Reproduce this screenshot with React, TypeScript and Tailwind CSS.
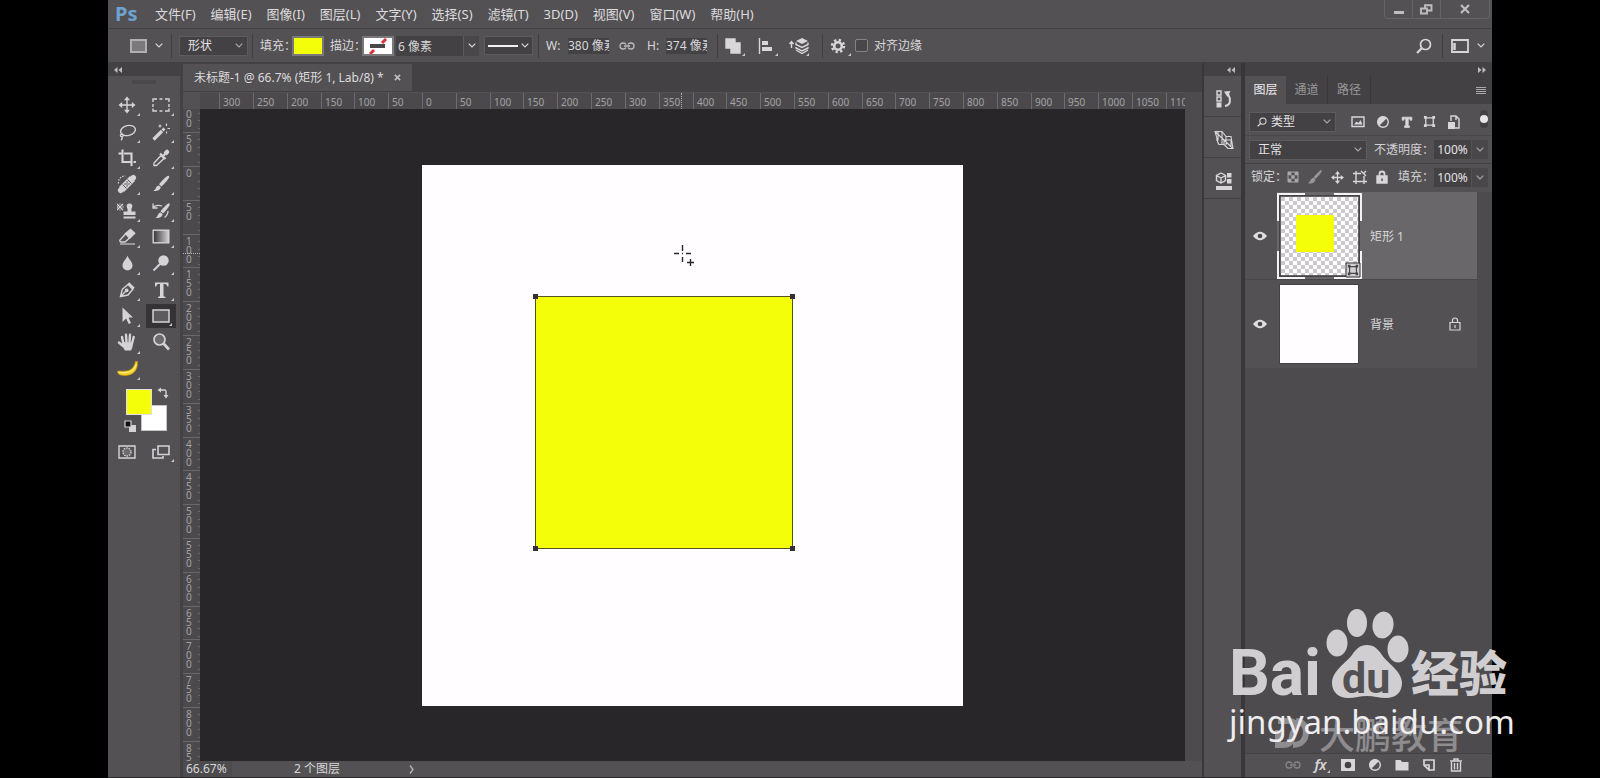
import React from "react";
import type { ReactNode } from "react";

const SCALE = 0.6763;
const ORIGIN_X = 222;
const ORIGIN_Y = 57;

const menus = ["文件(F)", "编辑(E)", "图像(I)", "图层(L)", "文字(Y)", "选择(S)", "滤镜(T)", "3D(D)", "视图(V)", "窗口(W)", "帮助(H)"];

type SvgProps = { children: ReactNode; box?: string; className?: string };

function Svg({ children, box = "0 0 20 20", className = "size-5" }: SvgProps) {
  return (
    <svg viewBox={box} className={`shrink-0 ${className}`} fill="none" stroke="currentColor" strokeWidth="1.4" aria-hidden="true">
      {children}
    </svg>
  );
}

function Chevron({ className = "w-2 h-[5px]" }: { className?: string }) {
  return (
    <Svg box="0 0 8 5" className={className}>
      <path d="M.7.7 4 4 7.300 .7" strokeWidth="1.2" />
    </Svg>
  );
}

function Separator() {
  return <span className="h-6 w-px shrink-0 bg-[#403e41]" />;
}

function Corner() {
  return (
    <svg viewBox="0 0 4 4" className="absolute right-1 bottom-0.5 size-[3px]" aria-hidden="true">
      <path d="M4 0v4H0z" fill="#c9c7ca" />
    </svg>
  );
}

function Drop({ label, value, className, lead }: { label: string; value: string; className: string; lead?: ReactNode }) {
  return (
    <label className={`relative flex h-5 shrink-0 items-center border border-[#5d5b5e] bg-[#434144] ${className}`}>
      {lead}
      <select
        aria-label={label}
        className={`h-full w-full appearance-none bg-transparent text-xs leading-4 text-[#e4e2e5] outline-none ${lead ? "pl-1" : "pl-2"}`}
      >
        <option>{value}</option>
      </select>
      <span className="pointer-events-none absolute right-1 text-[#aaa8ab]">
        <Chevron />
      </span>
    </label>
  );
}

function Percent({ id, label }: { id: string; label: string }) {
  return (
    <div className="flex items-center text-xs">
      <label htmlFor={id} className="whitespace-nowrap text-[#d2d0d3]">{label}</label>
      <input id={id} defaultValue="100%" className="h-[19px] w-[37px] bg-[#434144] text-center text-xs text-[#e4e2e5] outline-none" />
      <button aria-label={`${label}滑块`} className="ml-px flex h-[19px] w-4 items-center justify-center bg-[#49474a] text-[#aaa8ab]">
        <Chevron />
      </button>
    </div>
  );
}

const icons = {
  move: (
    <Svg>
      <path d="M10 3v14M3 10h14" />
      <path d="M10 1.500 7 5.200h6zM10 18.500 7 14.800h6zM1.500 10 5.200 7v6zM18.500 10 14.800 7v6z" fill="currentColor" stroke="none" />
    </Svg>
  ),
  marquee: (
    <Svg>
      <path d="M2 7V4h4M8.500 4h3M14 4h4v3M18 9v3M18 13.500V16h-4M11.500 16h-3M6 16H2v-2.500M2 12V9" />
    </Svg>
  ),
  lasso: (
    <Svg>
      <ellipse cx="11" cy="8.500" rx="7.500" ry="5" transform="rotate(-12 11 8.500)" />
      <path d="M5.500 11.500c-2 .5-2.800 2.300-1.300 3 1.400.5 2.500-.6 1.800-2M5 14.500c.5 1.500.2 2.800-1 3.800" />
    </Svg>
  ),
  wand: (
    <Svg>
      <path d="m2.500 17.500 8.500-8.500" strokeWidth="3.200" />
      <path d="m11.500 8.500 2-2" strokeWidth="2.600" />
      <path d="M9 2.500v3M7.500 4h3M15.500 1.500v2.500M16.500 6.500h2.500M15.500 9.500v2" strokeWidth="1.200" />
    </Svg>
  ),
  crop: (
    <Svg>
      <path d="M5.500 1.500v12.500H15M1.500 5.500h3M7 5.500h7.500V18M16.500 14h2.500" strokeWidth="2.100" />
    </Svg>
  ),
  dropper: (
    <Svg>
      <path d="m10 7.500 3 3-7.500 7H3v-2.500z" />
      <path d="m9 5.500 5.500 5.500M12 8l3.500-3.500" strokeWidth="2.200" />
      <path d="M15.200 4.800 16 4" strokeWidth="4.500" strokeLinecap="round" />
    </Svg>
  ),
  heal: (
    <Svg>
      <path d="M4.500 15.500 15.500 4.500" strokeWidth="7" />
      <path d="M3.700 16.300 4 16M16 4l.3-.3" strokeWidth="5.500" strokeLinecap="round" />
      <path d="m5.500 10.500 4 4M10.500 5.500l4 4" stroke="#535154" strokeWidth="1" />
      <path d="M8 10h.1M10 12h.1M10 8h.1M12 10h.1M10 10h.1" stroke="#535154" strokeWidth="1.400" strokeLinecap="round" />
      <path d="M1.500 9.500C1 5 4 2 8.500 2" strokeDasharray="1.500 1.300" strokeWidth="1.200" />
    </Svg>
  ),
  brush: (
    <Svg>
      <path d="M17.500 2.500c.8.700-4.300 6.700-7 9L9 10.200c2.300-2.700 7.700-8.300 8.500-7.700z" fill="currentColor" />
      <path d="M8 11.500 9.700 13c0 3-3.700 4.500-7.700 4 2-1.200 2.500-2 3-3.300.5-1.200 1.500-2.200 3-2.200z" fill="currentColor" stroke="none" />
    </Svg>
  ),
  stamp: (
    <Svg>
      <path d="M12.500 2.500c2.500 0 3.300 2 2.700 3.500-.8 1.500-.9 3-.7 4.500h4V14H6.500v-3.500h4c.2-1.500.1-3-.7-4.500-.6-1.500.2-3.500 2.700-3.500zM6.500 15.500h12v2h-12z" fill="currentColor" stroke="none" />
      <path d="m0 3 6 6M6 3 0 9M0 3v0M3 2.500v1M3 8.500v1M0 6h1M5.500 6h1" strokeWidth="1.300" />
    </Svg>
  ),
  history: (
    <Svg>
      <path d="M18 3c.8.700-3.800 6.700-6 8.500l-1.500-1.300C12.500 7.500 17.200 2.500 18 3z" fill="currentColor" />
      <path d="m9.700 11.500 1.800 1.600c0 2.900-3.500 4.400-7 3.900 2.500-1 2.300-5.500 5.200-5.500z" fill="currentColor" stroke="none" />
      <path d="M2 6.500c2.500-2.500 5.500-2.500 9-1.500M2 2.500v4.500h4.500M17 10c0 3-1.500 5-3.500 6.500" strokeWidth="1.300" />
    </Svg>
  ),
  eraser: (
    <Svg>
      <path d="m8.500 6.500 5-4 4.200 3.800-5 5z" fill="currentColor" />
      <path d="m8.500 7-5.500 6c-.5.500 0 2 1 2h4l4.500-4" />
      <path d="M3 17h15" strokeWidth="1.100" />
    </Svg>
  ),
  gradient: (
    <Svg>
      <defs>
        <linearGradient id="toolGradient">
          <stop offset="0" stopColor="#353336" />
          <stop offset="1" stopColor="#d5d3d6" />
        </linearGradient>
      </defs>
      <rect x="2.200" y="3.200" width="15.600" height="12.600" fill="url(#toolGradient)" />
    </Svg>
  ),
  blur: (
    <Svg>
      <path d="M10.500 2.500c.8 3.500 5 6 5 10a5 5 0 0 1-10 0c0-4 4.200-6.500 5-10z" fill="currentColor" stroke="none" />
    </Svg>
  ),
  dodge: (
    <Svg>
      <circle cx="12.500" cy="7.500" r="5.200" fill="currentColor" stroke="none" />
      <path d="m9 11-6.500 6.500" strokeWidth="2" />
    </Svg>
  ),
  pen: (
    <Svg>
      <path d="m3.500 16.500 1.800-7.200L11 4.500l4.800 4.800L11 15zM3.500 16.500 9 11" />
      <circle cx="9.700" cy="10.300" r="1.200" fill="currentColor" />
      <path d="m11.500 3 5.500 5.500" strokeWidth="2.200" />
    </Svg>
  ),
  type: (
    <Svg>
      <path d="M4 2.500h13.500v4h-1.300c-.3-1.900-.9-2.500-3.700-2.500v11.500c0 1 .6 1.300 2 1.300V18H7v-1.200c1.400 0 2-.3 2-1.300V4c-2.800 0-3.400.6-3.700 2.500H4z" fill="currentColor" stroke="none" />
    </Svg>
  ),
  arrow: (
    <Svg>
      <path d="M5.500 1.500v14.500l3.600-3.500L11.700 18l2.300-1-2.500-5.500h4.500z" fill="currentColor" stroke="none" />
    </Svg>
  ),
  rect: (
    <Svg>
      <rect x="2" y="4" width="16" height="12" fill="#5d5b5e" strokeWidth="1.500" />
    </Svg>
  ),
  hand: (
    <Svg>
      <path d="M6.500 12 5 5M9.500 10 9 2.800M12.500 10l.5-7.200M15 11.500l1.700-6.500M6 14l-4-3.500" strokeWidth="2.400" strokeLinecap="round" />
      <path d="m5 10 11 .5c0 3-.5 5-2 8H8c-1.500-2-3-4.500-3-8.500z" fill="currentColor" stroke="none" />
    </Svg>
  ),
  zoom: (
    <Svg>
      <circle cx="8.500" cy="7.500" r="5.500" fill="#6d6b6e" strokeWidth="1.700" />
      <path d="m12.500 11.500 5.500 6" strokeWidth="2.600" />
    </Svg>
  ),
  banana: (
    <Svg box="0 0 24 20" className="h-5 w-6">
      <path d="M20.500 2.500h2c.2 7.500-2.500 12.500-10 13.800-5 .7-9-.3-10-2.800-.3-1 .4-1.600 1.500-1.500 9 .8 14.500-.5 16.500-9.500z" fill="#f5cf1f" stroke="#c99812" strokeWidth=".6" />
      <path d="M4 13.300c9 1.300 15.500-.8 17.300-8" stroke="#fdee86" strokeWidth="1.200" />
    </Svg>
  ),
};

const tools: { name: string; icon: ReactNode; plain?: boolean }[] = [
  { name: "移动工具", icon: icons.move },
  { name: "矩形选框工具", icon: icons.marquee },
  { name: "套索工具", icon: icons.lasso },
  { name: "魔棒工具", icon: icons.wand },
  { name: "裁剪工具", icon: icons.crop },
  { name: "吸管工具", icon: icons.dropper },
  { name: "修复画笔工具", icon: icons.heal },
  { name: "画笔工具", icon: icons.brush },
  { name: "仿制图章工具", icon: icons.stamp },
  { name: "历史记录画笔工具", icon: icons.history },
  { name: "橡皮擦工具", icon: icons.eraser },
  { name: "渐变工具", icon: icons.gradient },
  { name: "模糊工具", icon: icons.blur },
  { name: "减淡工具", icon: icons.dodge },
  { name: "钢笔工具", icon: icons.pen },
  { name: "横排文字工具", icon: icons.type },
  { name: "路径选择工具", icon: icons.arrow },
  { name: "矩形工具", icon: icons.rect },
  { name: "抓手工具", icon: icons.hand },
  { name: "缩放工具", icon: icons.zoom, plain: true },
  { name: "自定义工具", icon: icons.banana },
];

function SearchIcon({ className }: { className: string }) {
  return (
    <Svg box="0 0 16 16" className={className}>
      <circle cx="9.500" cy="6.500" r="5" strokeWidth="1.700" />
      <path d="M6 10 1 15" strokeWidth="2.200" />
    </Svg>
  );
}

function LinkIcon({ className }: { className: string }) {
  return (
    <Svg box="0 0 16 8" className={className}>
      <path d="M7 2.500C6.500 1.300 5.500 1 4 1a3 3 0 0 0 0 6c1.500 0 2.500-.3 3-1.500M9 2.500C9.500 1.300 10.500 1 12 1a3 3 0 0 1 0 6c-1.500 0-2.500-.3-3-1.500M5 4h6" strokeWidth="1.300" />
    </Svg>
  );
}

function HalfCircle() {
  return (
    <Svg box="0 0 14 14" className="size-3.5">
      <circle cx="7" cy="7" r="5.300" />
      <path d="M11 3a5.500 5.500 0 0 0-8 8z" fill="currentColor" stroke="none" />
    </Svg>
  );
}

function FrameIcon({ className }: { className: string }) {
  return (
    <Svg box="0 0 14 14" className={className}>
      <path d="M3 3h8v8H3z" />
      <path d="M1 1h3v3H1zM10 1h3v3h-3zM1 10h3v3H1zM10 10h3v3h-3z" fill="currentColor" stroke="none" />
    </Svg>
  );
}

function MenuBar() {
  return (
    <header className="flex h-7 shrink-0 items-center bg-[#535154]">
      <span className="w-[47px] pl-[7px] text-xl leading-7 font-bold text-[#6ea3cf]">Ps</span>
      <nav className="flex flex-1 gap-[15px] text-[13px] leading-7 text-[#dddbde]">
        {menus.map((m) => (
          <button key={m} className="whitespace-nowrap">{m}</button>
        ))}
      </nav>
      <div className="mr-0.5 flex h-[19px] self-start rounded-b border border-t-0 border-[#646265] text-[#bfbdc0]">
        <button aria-label="最小化" className="flex w-7 items-center justify-center border-r border-[#646265]">
          <span className="mt-1.5 h-[3px] w-2.5 bg-current" />
        </button>
        <button aria-label="还原" className="flex w-7 items-center justify-center border-r border-[#646265]">
          <Svg box="0 0 13 11" className="h-[11px] w-[13px]">
            <path d="M1 4.500h6v5H1zM5 4V1.200h6.500v5.300H8" strokeWidth="1.900" />
          </Svg>
        </button>
        <button aria-label="关闭" className="flex w-12 items-center justify-center">
          <Svg box="0 0 10 10" className="size-2.5">
            <path d="m1 1 8 8M9 1 1 9" strokeWidth="2.200" />
          </Svg>
        </button>
      </div>
    </header>
  );
}

function OptionsBar() {
  return (
    <div className="flex h-[35px] shrink-0 items-center border-y border-[#434144] bg-[#535154] text-xs text-[#d8d6d9]">
      <button aria-label="矩形工具预设" className="ml-[22px] flex items-center gap-2">
        <span className="h-3.5 w-[17px] border-2 border-[#b1afb2] bg-[#7b797c]" />
        <Chevron />
      </button>
      <span className="w-2" />
      <Separator />
      <Drop label="工具模式" value="形状" className="mr-1 ml-[7px] w-[69px]" />
      <Separator />
      <span className="ml-[7px] w-8 whitespace-nowrap">填充：</span>
      <button aria-label="填充颜色" className="mr-1.5 h-5 w-8 border-2 border-[#7a787b] bg-[#f4fe09]" />
      <span className="w-8 whitespace-nowrap">描边：</span>
      <button aria-label="描边颜色" className="h-5 w-8 border-2 border-[#7a787b] bg-white">
        <svg viewBox="0 0 28 16" className="h-4 w-7" aria-hidden="true">
          <path d="m6 16 4-4M18 5l4-4" stroke="#d8343c" strokeWidth="3" />
          <path d="M6 6h15v4H6z" fill="#49474a" />
        </svg>
      </button>
      <input aria-label="描边宽度" defaultValue="6 像素" className="ml-0.5 h-5 w-[67px] bg-[#434144] pl-0.5 text-xs outline-none" />
      <button aria-label="描边宽度滑块" className="flex h-5 w-4 items-center justify-center border-l border-[#5d5b5e] bg-[#49474a]">
        <Chevron />
      </button>
      <button aria-label="描边类型" className="mx-[5px] flex h-[19px] w-[49px] items-center justify-between border border-[#5d5b5e] bg-[#434144] px-[3px]">
        <span className="h-0.5 w-[30px] bg-[#f1eff2]" />
        <Chevron />
      </button>
      <Separator />
      <label htmlFor="shape-w" className="ml-[7px] w-[22px]">W:</label>
      <input id="shape-w" defaultValue="380 像素" className="h-4 w-[41px] bg-[#434144] text-xs outline-none" />
      <button aria-label="链接宽高" className="mx-2.5 text-[#bfbdc0]"><LinkIcon className="h-2 w-4" /></button>
      <label htmlFor="shape-h" className="w-[21px] pl-0.5">H:</label>
      <input id="shape-h" defaultValue="374 像素" className="h-4 w-[41px] bg-[#434144] text-xs outline-none" />
      <span className="w-2.5" />
      <Separator />
      <button aria-label="路径操作" className="relative ml-[7px] flex h-6 w-6 items-center">
        <Svg box="0 0 16 16" className="size-4">
          <path d="M1 1h9v4h5v10H6v-5H1z" fill="currentColor" stroke="currentColor" />
        </Svg>
        <Corner />
      </button>
      <button aria-label="路径对齐" className="relative ml-[9px] flex h-6 w-6 items-center">
        <Svg box="0 0 16 16" className="size-4">
          <path d="M1.500 0v16" />
          <path d="M4 3h6v4H4zM4 9h10v4H4z" fill="currentColor" stroke="none" />
        </Svg>
        <Corner />
      </button>
      <button aria-label="路径排列" className="relative ml-[7px] flex h-6 w-6 items-center">
        <Svg box="0 0 20 16" className="h-4 w-5">
          <path d="M2.500 10V4M.5 6l2-2.500 2 2.500" />
          <path d="m13 0 6 3-6 3-6-3z" fill="currentColor" stroke="none" />
          <path d="M7 4.500v2l6 3 6-3v-2M7 9v1l6 3 6-3V9M7 12l6 3.500 6-3.500" />
        </Svg>
        <Corner />
      </button>
      <span className="w-[9px]" />
      <Separator />
      <button aria-label="其他选项" className="relative ml-[7px] flex h-6 w-[25px] items-center">
        <Svg box="0 0 16 16" className="size-4">
          <circle cx="8" cy="8" r="3.800" strokeWidth="2.600" />
          <circle cx="8" cy="8" r="6" strokeWidth="2.400" strokeDasharray="2.300 2.410" />
        </Svg>
        <Corner />
      </button>
      <label className="flex items-center gap-1.5 whitespace-nowrap">
        <input type="checkbox" className="size-[13px] appearance-none rounded-xs border border-[#858386] bg-[#49474a]" />
        对齐边缘
      </label>
      <div className="ml-auto flex items-center pr-[7px]">
        <button aria-label="搜索"><SearchIcon className="size-4" /></button>
        <span className="w-2.5" />
        <Separator />
        <button aria-label="工作区" className="ml-2 flex items-center gap-2">
          <Svg box="0 0 18 14" className="h-3.5 w-[18px]">
            <path d="M1 1h16v12H1z" strokeWidth="1.800" />
            <path d="M3.500 4v7" strokeWidth="2.500" />
          </Svg>
          <Chevron />
        </button>
      </div>
    </div>
  );
}

function Toolbox() {
  return (
    <aside className="flex w-[72px] shrink-0 flex-col bg-[#535154] text-[#d5d3d6]">
      <div className="flex h-[13px] items-center bg-[#434144] pl-1.5 text-[#bdbbbe]">
        <DoubleArrow />
      </div>
      <span className="mt-1 h-1 w-6 self-center bg-[#4b494c]" />
      <div className="mt-2 grid h-[290px] grid-cols-2 grid-rows-11 px-0.5">
        {tools.map((t) => (
          <button
            key={t.name}
            aria-label={t.name}
            className={t.name === "矩形工具" ? "relative mx-0.5 my-px flex items-center justify-center bg-[#353336]" : "relative flex items-center justify-center"}
          >
            {t.icon}
            {!t.plain && <Corner />}
          </button>
        ))}
      </div>
      <div className="relative mt-[3px] h-12 w-full">
        <button aria-label="背景色" className="absolute top-5 left-[33px] size-[26px] border border-[#c5c3c6] bg-white" />
        <button aria-label="前景色" className="absolute top-1 left-[18px] size-[26px] border border-[#e2e0e3] bg-[#f4fe09]" />
        <button aria-label="切换前景色和背景色" className="absolute top-0.5 left-[49px]">
          <Svg box="0 0 12 12" className="size-3">
            <path d="M2 3h5.500q1.500 0 1.500 1.500V9" />
            <path d="M4 .5v5L.5 3zM6.500 8h5L9 11.500z" fill="currentColor" stroke="none" />
          </Svg>
        </button>
        <button aria-label="默认颜色" className="absolute top-[35px] left-4">
          <Svg box="0 0 12 12" className="size-3">
            <path d="M5 5h7v7H5z" fill="currentColor" stroke="none" />
            <path d="M1 1h6v6H1z" fill="#111" strokeWidth="1.200" />
          </Svg>
        </button>
      </div>
      <div className="mt-[7px] grid h-6 grid-cols-2 px-0.5">
        <button aria-label="快速蒙版" className="flex items-center justify-center">
          <Svg box="0 0 18 14" className="h-3.5 w-[18px]">
            <path d="M1 1h16v12H1z" />
            <circle cx="9" cy="7" r="4" fill="#6d6b6e" strokeDasharray="1.500 1" />
          </Svg>
        </button>
        <button aria-label="屏幕模式" className="relative flex items-center justify-center">
          <Svg box="0 0 18 14" className="h-3.5 w-[18px]">
            <path d="M6 1h11v8.500H6zM4 4.500H1V13h10v-2" strokeWidth="1.600" />
          </Svg>
          <Corner />
        </button>
      </div>
    </aside>
  );
}

function DoubleArrow({ flip = false }: { flip?: boolean }) {
  return (
    <svg viewBox="0 0 8 6" className={flip ? "h-1.5 w-2 rotate-180" : "h-1.5 w-2"} fill="currentColor" aria-hidden="true">
      <path d="M3.500 0v6L0 3zM8 0v6L4.500 3z" />
    </svg>
  );
}

const span = (origin: number, v: number) => Math.round(origin + (v + 50) * SCALE) - Math.round(origin + v * SCALE);

function TopRuler() {
  const first = -300;
  const marks = Array.from({ length: 29 }, (_, i) => first + i * 50);
  return (
    <div className="relative flex h-4 overflow-hidden bg-[#4b494c] pl-[19px] text-[10px] leading-[18px] text-[#a3a1a4]">
      {marks.map((v) => (
        <span key={v} className="shrink-0 border-l border-[#6d6b6e] pl-[3px]" style={{ width: span(ORIGIN_X, v) }}>
          {Math.abs(v)}
        </span>
      ))}
      <span className="absolute inset-y-0 left-[481px] border-l border-dotted border-[#b3b1b4]" />
    </div>
  );
}

function SideRuler() {
  const marks = Array.from({ length: 20 }, (_, i) => i * 50 - 100);
  return (
    <div className="relative w-[17px] shrink-0 overflow-hidden bg-[#4b494c] text-[10px] leading-[9px] text-[#a3a1a4]">
      <div className="absolute inset-x-0 -top-[11px]">
        {marks.map((v) => (
          <div key={v} className="flex justify-between border-t border-[#69676a] pt-0.5" style={{ height: span(ORIGIN_Y, v) }}>
            <span className="flex flex-col pl-[3px]">
              {String(Math.abs(v)).split("").map((d, i) => <span key={i}>{d}</span>)}
            </span>
            <span className="mt-1 flex h-6 flex-col justify-between">
              {[0, 1, 2, 3].map((n) => <span key={n} className="h-px w-0.5 bg-[#69676a]" />)}
            </span>
          </div>
        ))}
      </div>
      <span className="absolute inset-x-0 top-36 border-t border-dotted border-[#b3b1b4]" />
    </div>
  );
}

function Handle({ className }: { className: string }) {
  return <span className={`absolute size-[5px] bg-[#333134] ${className}`} />;
}

function DocumentArea() {
  return (
    <main className="flex min-w-0 flex-1 flex-col bg-[#434144]">
      <div className="flex h-[29px] shrink-0 pb-px">
        <div className="flex items-center gap-2.5 border-t border-[#434144] bg-[#535154] px-[11px] text-xs whitespace-nowrap text-[#dddbde]">
          未标题-1 @ 66.7% (矩形 1, Lab/8) *
          <button aria-label="关闭文档" className="text-[#bfbdc0]">
            <Svg box="0 0 8 8" className="size-[7px]">
              <path d="m1 1 6 6M7 1 1 7" strokeWidth="1.800" />
            </Svg>
          </button>
        </div>
      </div>
      <div className="flex min-h-0 flex-1">
        <div className="flex min-w-0 flex-1 flex-col">
          <div className="flex h-[17px] shrink-0 border-t border-[#535154]">
            <span className="w-[17px] shrink-0 bg-[#535154]" />
            <div className="min-w-0 flex-1"><TopRuler /></div>
          </div>
          <div className="flex min-h-0 flex-1">
            <SideRuler />
            <div className="flex flex-1 items-center justify-center bg-[#282629] pr-px">
              <div className="relative h-[541px] w-[541px] bg-[#fffdff]">
                <div className="absolute top-[131px] left-[113px] h-[253px] w-[258px] border border-[#55541f] bg-[#f4fe09]">
                  <Handle className="-top-[3px] -left-[3px]" />
                  <Handle className="-top-[3px] -right-[3px]" />
                  <Handle className="-bottom-[3px] -left-[3px]" />
                  <Handle className="-right-[3px] -bottom-[3px]" />
                </div>
                <svg viewBox="0 0 22 22" className="absolute top-[79px] left-[251px] size-[22px]" stroke="#29272a" strokeWidth="1.400" aria-hidden="true">
                  <path d="M9.500 1v6M9.500 13v5M1 9.500h5M13 9.500h5M9 9.500h1M17.500 15v7M14 18.500h7" />
                </svg>
              </div>
            </div>
          </div>
        </div>
        <div className="w-[17px] shrink-0 bg-[#4d4b4e]" />
      </div>
      <footer className="flex h-4 shrink-0 items-center bg-[#4d4b4e] text-xs leading-4 text-[#d8d6d9]">
        <span className="w-[49px] pl-[3px]">66.67%</span>
        <span className="flex flex-1 items-center bg-[#535154] pl-[62px]">
          <span className="w-[115px]">2 个图层</span>
          <span className="text-[#b3b1b4]">
            <Svg box="0 0 5 9" className="h-[9px] w-[5px]"><path d="m1 .5 3 4-3 4" /></Svg>
          </span>
        </span>
      </footer>
    </main>
  );
}

function Dock() {
  const cell = "flex h-[41px] items-center justify-center border-b border-[#434144] pt-1.5 pl-0.5 text-[#d8d6d9]";
  return (
    <aside className="flex w-[37px] shrink-0 flex-col bg-[#535154]">
      <div className="flex h-[13px] items-center justify-end bg-[#434144] pr-1.5 text-[#bdbbbe]"><DoubleArrow /></div>
      <button aria-label="历史记录" className={cell}>
        <Svg box="0 0 18 20" className="h-5 w-[18px]">
          <path d="M2 2h4v4H2zM2 8h4v4H2z" />
          <path d="M1.500 13.500h5v5h-5z" fill="currentColor" stroke="none" />
          <path d="M10 17c6-1 6-7 3-12" strokeWidth="2" />
          <path d="m9 2.500 6.500-.5-3 6z" fill="currentColor" stroke="none" />
        </Svg>
      </button>
      <button aria-label="画笔设置" className={cell}>
        <Svg className="size-5">
          <path d="M1 1.500h7l4 5h5l2 12h-5l-4-4H5c-2-2-1.500-5-2.500-8zM1 1.500 19 18.500M4 2v8H2M8 1.500V14M12 6.500V15M10 14.500V10h7v7" strokeWidth="1.100" />
        </Svg>
      </button>
      <button aria-label="属性" className={cell}>
        <Svg box="0 0 18 18" className="size-[18px]">
          <path d="m6 1 4.500 2.500v5L6 11 1.500 8.500v-5zM1.500 3.500 6 6l4.500-2.500M6 6v5" />
          <path d="M12 1h4.500v4.500H12zM12 7h4.500v4.500H12zM1 14h16v4H1z" fill="currentColor" stroke="none" />
        </Svg>
      </button>
    </aside>
  );
}

function Eye() {
  return (
    <Svg box="0 0 14 10" className="h-2.5 w-3.5">
      <path d="M1 5q6-7 12 0-6 7-12 0z" fill="#e0dee1" stroke="#e0dee1" />
      <circle cx="7" cy="5" r="2.300" fill="#49474a" stroke="none" />
    </Svg>
  );
}

function LayersPanel() {
  return (
    <aside className="flex w-[247px] shrink-0 flex-col bg-[#4d4b4e] text-xs text-[#d8d6d9]">
      <div className="flex h-[13px] shrink-0 items-center justify-end bg-[#434144] pr-1.5 text-[#bdbbbe]"><DoubleArrow flip /></div>
      <div className="flex h-[28px] shrink-0 items-stretch bg-[#434144]">
        <button className="w-[41px] bg-[#535154] text-[#efedf0]">图层</button>
        <button className="w-[42px] border-r border-[#39373a] text-[#99979a]">通道</button>
        <button className="w-[43px] border-r border-[#39373a] text-[#99979a]">路径</button>
        <button aria-label="面板菜单" className="mr-1.5 ml-auto flex flex-col justify-center gap-px text-[#a9a7aa]">
          <span className="h-px w-2.5 bg-current" /><span className="h-px w-2.5 bg-current" /><span className="h-px w-2.5 bg-current" /><span className="h-px w-2.5 bg-current" />
        </button>
      </div>
      <div className="flex h-[31px] shrink-0 items-center bg-[#535154] px-1 pt-1">
        <Drop label="图层过滤" value="类型" className="w-[87px] pl-[7px]" lead={<SearchIcon className="size-2.5" />} />
        <div className="flex flex-1 items-center justify-between pr-[19px] pl-[15px]">
          <button aria-label="像素图层">
            <Svg box="0 0 14 14" className="size-3.5">
              <path d="M1 2h12v9.500H1z" /><path d="m3 9.500 2.500-3 2 1.500L9.500 5 11.500 9.500z" fill="currentColor" stroke="none" />
            </Svg>
          </button>
          <button aria-label="调整图层"><HalfCircle /></button>
          <button aria-label="文字图层"><Svg className="size-3"><path d="M2 2h16v5h-2.500C15 5 14.500 4.500 12 4.500v10.500c0 1 .5 1.500 2 1.500V19H6v-2.500c1.500 0 2-.5 2-1.500V4.500C5.500 4.500 5 5 4.500 7H2z" fill="currentColor" /></Svg></button>
          <button aria-label="形状图层"><FrameIcon className="size-[13px]" /></button>
          <button aria-label="智能对象">
            <Svg box="0 0 14 14" className="size-3.5">
              <path d="M4 6V1h5l3 3v9H8M9 1v4" /><path d="M1 7h7v7H1z" fill="currentColor" stroke="none" />
            </Svg>
          </button>
        </div>
        <button aria-label="过滤开关" className="mb-1.5 h-[18px] w-2 rounded bg-[#434144]"><span className="mb-auto block size-2 rounded-full bg-[#e8e6e9]" /></button>
      </div>
      <div className="flex h-7 shrink-0 items-center justify-between border-t border-[#49474a] bg-[#535154] px-1">
        <Drop label="混合模式" value="正常" className="w-[118px]" />
        <Percent id="opacity" label="不透明度：" />
      </div>
      <div className="flex h-[29px] shrink-0 items-center border-t border-[#434144] bg-[#535154] px-1 pb-0.5">
        <span className="pl-0.5 whitespace-nowrap">锁定：</span>
        <div className="mr-auto flex items-center gap-[9px]">
          <button aria-label="锁定透明像素" className="text-[#a9a7aa]">
            <Svg box="0 0 12 12" className="size-3"><path d="M1 1h10v10H1z" strokeWidth="1" /><path d="M1 1h3.300v3.300H1zM7.700 1H11v3.300H7.700zM4.300 4.300h3.400v3.400H4.300zM1 7.700h3.300V11H1zM7.700 7.700H11V11H7.700z" fill="currentColor" stroke="none" /></Svg>
          </button>
          <button aria-label="锁定图像像素" className="text-[#99979a]">
            <Svg className="size-3.5"><path d="M19 1c1 1-5 8-8 11L9 10C12 6 18 0 19 1zM8 11.500l2 2c0 4-4 5.500-9 5 4-2 3-7 7-7z" fill="currentColor" /></Svg>
          </button>
          <button aria-label="锁定位置">
            <Svg className="size-[13px]"><path d="M10 3v14M3 10h14" strokeWidth="2" /><path d="M10 0 6 5h8zM10 20l-4-5h8zM0 10l5-4v8zM20 10l-5-4v8z" fill="currentColor" stroke="none" /></Svg>
          </button>
          <button aria-label="防止自动嵌套">
            <Svg box="0 0 14 14" className="size-3.5"><path d="M3 1v13M0 3.500h8M0 11.500h14M11 6v8M8 1l5 5M13 1l-2 2" /></Svg>
          </button>
          <button aria-label="锁定全部">
            <Svg box="0 0 12 14" className="h-3.5 w-3"><path d="M3.500 6V4a2.500 2.500 0 0 1 5 0v2" strokeWidth="1.800" /><path d="M1 6h10v7H1z" fill="currentColor" /><path d="M5.300 8.500h1.500v2.500H5.300z" fill="#535154" stroke="none" /></Svg>
          </button>
        </div>
        <Percent id="fill" label="填充：" />
      </div>
      <ul className="mr-[15px] shrink-0">
        <li className="flex h-[87px] items-center bg-[#69676a]">
          <button aria-label="显示矩形 1" className="flex h-full w-[32px] items-center justify-center bg-[#535154] pr-0.5"><Eye /></button>
          <div className="relative h-[86px] w-[85px] shrink-0">
            <svg viewBox="0 0 85 86" className="size-full" aria-hidden="true">
              <defs>
                <pattern id="checker" width="8" height="8" patternUnits="userSpaceOnUse">
                  <path d="M0 0h8v8H0z" fill="#fff" /><path d="M0 0h4v4H0zM4 4h4v4H4z" fill="#cbc9cc" />
                </pattern>
              </defs>
              <path d="M1 28V1h27M57 1h27v27M84 58v27H57M28 85H1V58" fill="none" stroke="#f4f2f5" strokeWidth="2" />
              <path d="M3 3h79v80H3z" fill="url(#checker)" stroke="#39373a" strokeWidth="1.500" />
              <path d="M19 22h38v37H19z" fill="#f4fe09" />
              <path d="M69 70h14v14H69z" fill="#d2d0d3" stroke="#333134" />
            </svg>
            <span className="absolute right-[3px] bottom-[3px] text-[#49474a]"><FrameIcon className="size-3" /></span>
          </div>
          <span className="pt-0.5 pl-2">矩形 1</span>
        </li>
        <li className="flex h-[89px] items-center border-t border-[#49474a] bg-[#535154]">
          <button aria-label="显示背景" className="flex h-full w-[32px] items-center justify-center pr-0.5"><Eye /></button>
          <span className="mx-0.5 size-20 shrink-0 border border-[#434144] bg-[#fffdff]" />
          <span className="flex-1 pt-0.5 pl-[9px]">背景</span>
          <span className="mr-4">
            <Svg box="0 0 12 14" className="h-3.5 w-3"><path d="M3.500 5.500V3.500a2.500 2.500 0 0 1 5 0v2M1 5.500h10V13H1zM6 8v3" strokeWidth="1.200" /></Svg>
          </span>
        </li>
      </ul>
      <div className="flex-1" />
      <footer className="flex h-6 shrink-0 items-center border-t border-[#434144] bg-[#535154] pb-0.5 pl-10">
        <button aria-label="链接图层" className="flex w-[22px] text-[#89878a]"><LinkIcon className="h-2 w-4" /></button>
        <button aria-label="图层样式" className="relative w-[27px] text-center text-sm leading-5 font-semibold italic">fx<Corner /></button>
        <button aria-label="图层蒙版" className="flex w-[27px] justify-center">
          <Svg box="0 0 14 12" className="h-3 w-3.5"><path d="M0 0h14v12H0z" fill="currentColor" stroke="none" /><circle cx="7" cy="6" r="3.300" fill="#434144" stroke="none" /></Svg>
        </button>
        <button aria-label="新建调整图层" className="relative flex w-[27px] justify-center"><HalfCircle /></button>
        <button aria-label="新建组" className="flex w-[27px] justify-center">
          <Svg box="0 0 14 12" className="h-3 w-3.5"><path d="M.5 1h5l1.500 2h6.500v8.500H.5z" fill="currentColor" stroke="none" /></Svg>
        </button>
        <button aria-label="新建图层" className="flex w-[27px] justify-center">
          <Svg box="0 0 12 12" className="size-3"><path d="M1 5V1h10v10H6M1 6h5v5z" strokeWidth="1.700" /></Svg>
        </button>
        <button aria-label="删除图层" className="flex w-[27px] justify-center">
          <Svg box="0 0 12 14" className="h-3.5 w-3"><path d="M0 3h12M4 2.500V1h4v1.500M1.500 4v9h9V4M4.500 5v6.500M7.500 5v6.500" /></Svg>
        </button>
      </footer>
    </aside>
  );
}

function Watermark() {
  return (
    <div className="pointer-events-none absolute right-[83px] bottom-[17px] h-[152px] w-[288px] whitespace-nowrap">
      <div className="absolute bottom-2.5 left-[46px] flex items-center gap-2.5 font-['Noto_Sans_CJK_SC'] text-4xl leading-9 font-medium text-[#8e8c8f]">
        <svg viewBox="0 0 34 30" className="h-[30px] w-[34px]" fill="none" stroke="currentColor" strokeWidth="6" aria-hidden="true">
          <path d="M3 12v15h5c7 0 9-4 9-9s4-5 4-9-3-6-8-6H3M21 3c7 1 10 5 10 11 0 8-5 13-13 13" />
        </svg>
        大鹏教育
      </div>
      <div className="absolute top-0 left-0 flex items-end text-[#d0ced1]">
        <span className="w-24 font-['Roboto'] text-[64px] leading-[70px] font-bold">Bai</span>
        <div className="relative h-[100px] w-[86px]">
          <svg viewBox="0 0 86 96" className="absolute -top-1 left-0 h-24 w-[86px]" fill="currentColor" aria-hidden="true">
            <ellipse cx="12" cy="38" rx="10.500" ry="13.500" />
            <ellipse cx="32" cy="18" rx="10" ry="14" />
            <ellipse cx="58" cy="20" rx="10.500" ry="13.500" transform="rotate(8 58 20)" />
            <ellipse cx="73" cy="44" rx="10.500" ry="13.500" />
            <path d="M42 40c7 0 11 4 15 10 5 8 20 16 20 28 0 10-7 15-16 15-7 0-12-2-19-2s-12 2-19 2C14 93 7 87 7 78c0-12 14-20 20-28 4-6 8-10 15-10z" />
          </svg>
          <span className="absolute top-[45px] left-[17px] font-['Roboto'] text-[43px] leading-[48px] font-bold text-[#535154]">du</span>
        </div>
        <span className="font-['Noto_Sans_CJK_SC'] text-5xl leading-[78px] font-black">经验</span>
      </div>
      <span className="absolute bottom-[19px] left-0 text-[33px] leading-10 text-[#efedf0]">jingyan.baidu.com</span>
    </div>
  );
}

export default function App() {
  return (
    <div className="relative min-h-screen overflow-hidden bg-black font-['Noto_Sans','Noto_Sans_CJK_SC',sans-serif]">
      <div className="mx-auto flex min-h-screen w-[86.5%] flex-col border-b border-[#29272a] bg-[#39373a]">
        <MenuBar />
        <OptionsBar />
        <div className="flex flex-1">
          <Toolbox />
          <span className="w-[3px] shrink-0 bg-[#434144]" />
          <DocumentArea />
          <span className="w-0.5 shrink-0" />
          <Dock />
          <span className="w-1 shrink-0" />
          <LayersPanel />
        </div>
      </div>
      <Watermark />
    </div>
  );
}
